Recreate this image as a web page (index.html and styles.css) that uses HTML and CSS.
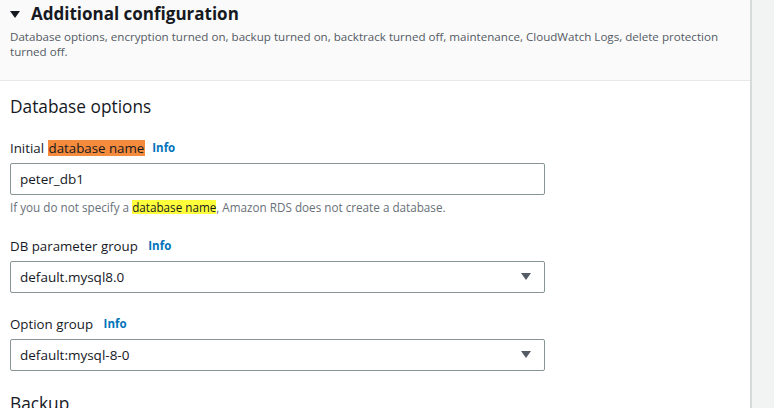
FILE: index.html
```html
<!DOCTYPE html>
<html>
<head>
<meta charset="utf-8">
<link rel="stylesheet" href="styles.css">
</head>
<body>
<div class="page">
  <div class="panel">
    <div class="header">
      <div class="title-row">
        <svg class="caret" width="10" height="8" viewBox="0 0 10 8"><polygon points="0,0 10,0 5,7" fill="#16191f"/></svg>
        <h2 class="title">Additional configuration</h2>
      </div>
      <p class="desc">Database options, encryption turned on, backup turned on, backtrack turned off, maintenance, CloudWatch Logs, delete protection turned off.</p>
    </div>
    <div class="body">
      <h3 class="section">Database options</h3>
      <div class="field">
        <div class="label">Initial <mark class="hl-orange">database name</mark> <a class="info">Info</a></div>
        <div class="input">peter_db1</div>
        <div class="hint">If you do not specify a <mark class="hl-yellow">database name</mark>, Amazon RDS does not create a database.</div>
      </div>
      <div class="field">
        <div class="label">DB parameter group <a class="info">Info</a></div>
        <div class="input select">default.mysql8.0<svg class="arrow" width="10" height="8" viewBox="0 0 10 8"><polygon points="0,0 10,0 5,7" fill="#545b64"/></svg></div>
      </div>
      <div class="field">
        <div class="label">Option group <a class="info">Info</a></div>
        <div class="input select">default:mysql-8-0<svg class="arrow" width="10" height="8" viewBox="0 0 10 8"><polygon points="0,0 10,0 5,7" fill="#545b64"/></svg></div>
      </div>
      <h3 class="section backup">Backup</h3>
    </div>
  </div>
  <div class="side"></div>
</div>
</body>
</html>
```
FILE: styles.css
```css
* { box-sizing: border-box; }
html, body { margin: 0; padding: 0; height: 100%; overflow: hidden; }
body { font-family: "Open Sans", "Noto Sans", sans-serif; color: #16191f; background: #f2f3f3; }
.page { display: flex; height: 408px; }
.panel { width: 752px; background: #fff; border-right: 2px solid #d5dbdb; flex: none; }
.side { flex: 1; background: #f2f3f3; }
.header { background: #fafafa; border-bottom: 1px solid #e5e9e9; height: 81px; padding: 1px 10px 0 10px; }
.title-row { display: flex; align-items: center; gap: 11px; height: 26px; }
.caret { flex: none; margin-top: 1px; }
.title { margin: 0; font-size: 17px; font-weight: 700; line-height: 26px; }
.desc { margin: 2px 0 0 0; font-size: 11.6px; line-height: 15px; color: #545b64; width: 730px; }
.body { padding: 0 10px; }
.section { margin: 13px 0 0 0; font-size: 17.3px; font-weight: 400; line-height: 26px; }
.field { margin-top: 18px; }
.field + .field { margin-top: 21px; }
.label { font-size: 13.3px; line-height: 20px; display: flex; align-items: center; white-space: pre; }
.hl-orange { background: #f58b3c; color: #16191f; display: inline-block; line-height: 16px; padding: 0 1px; }
.hl-yellow { background: #ffff3c; color: #16191f; display: inline-block; line-height: 14px; }
.info { color: #0073bb; font-weight: 700; font-size: 11.5px; margin-left: 7px; }
.input { width: 535px; height: 32px; margin-top: 5px; border: 1px solid #879596; border-radius: 2px; padding: 0 10px 0 9px; font-size: 13.5px; line-height: 30px; display: flex; align-items: center; justify-content: space-between; }
.arrow { margin-right: 3px; }
.hint { font-size: 11.7px; line-height: 16px; color: #687078; margin-top: 4px; }
.backup { margin-top: 20px; }
```
